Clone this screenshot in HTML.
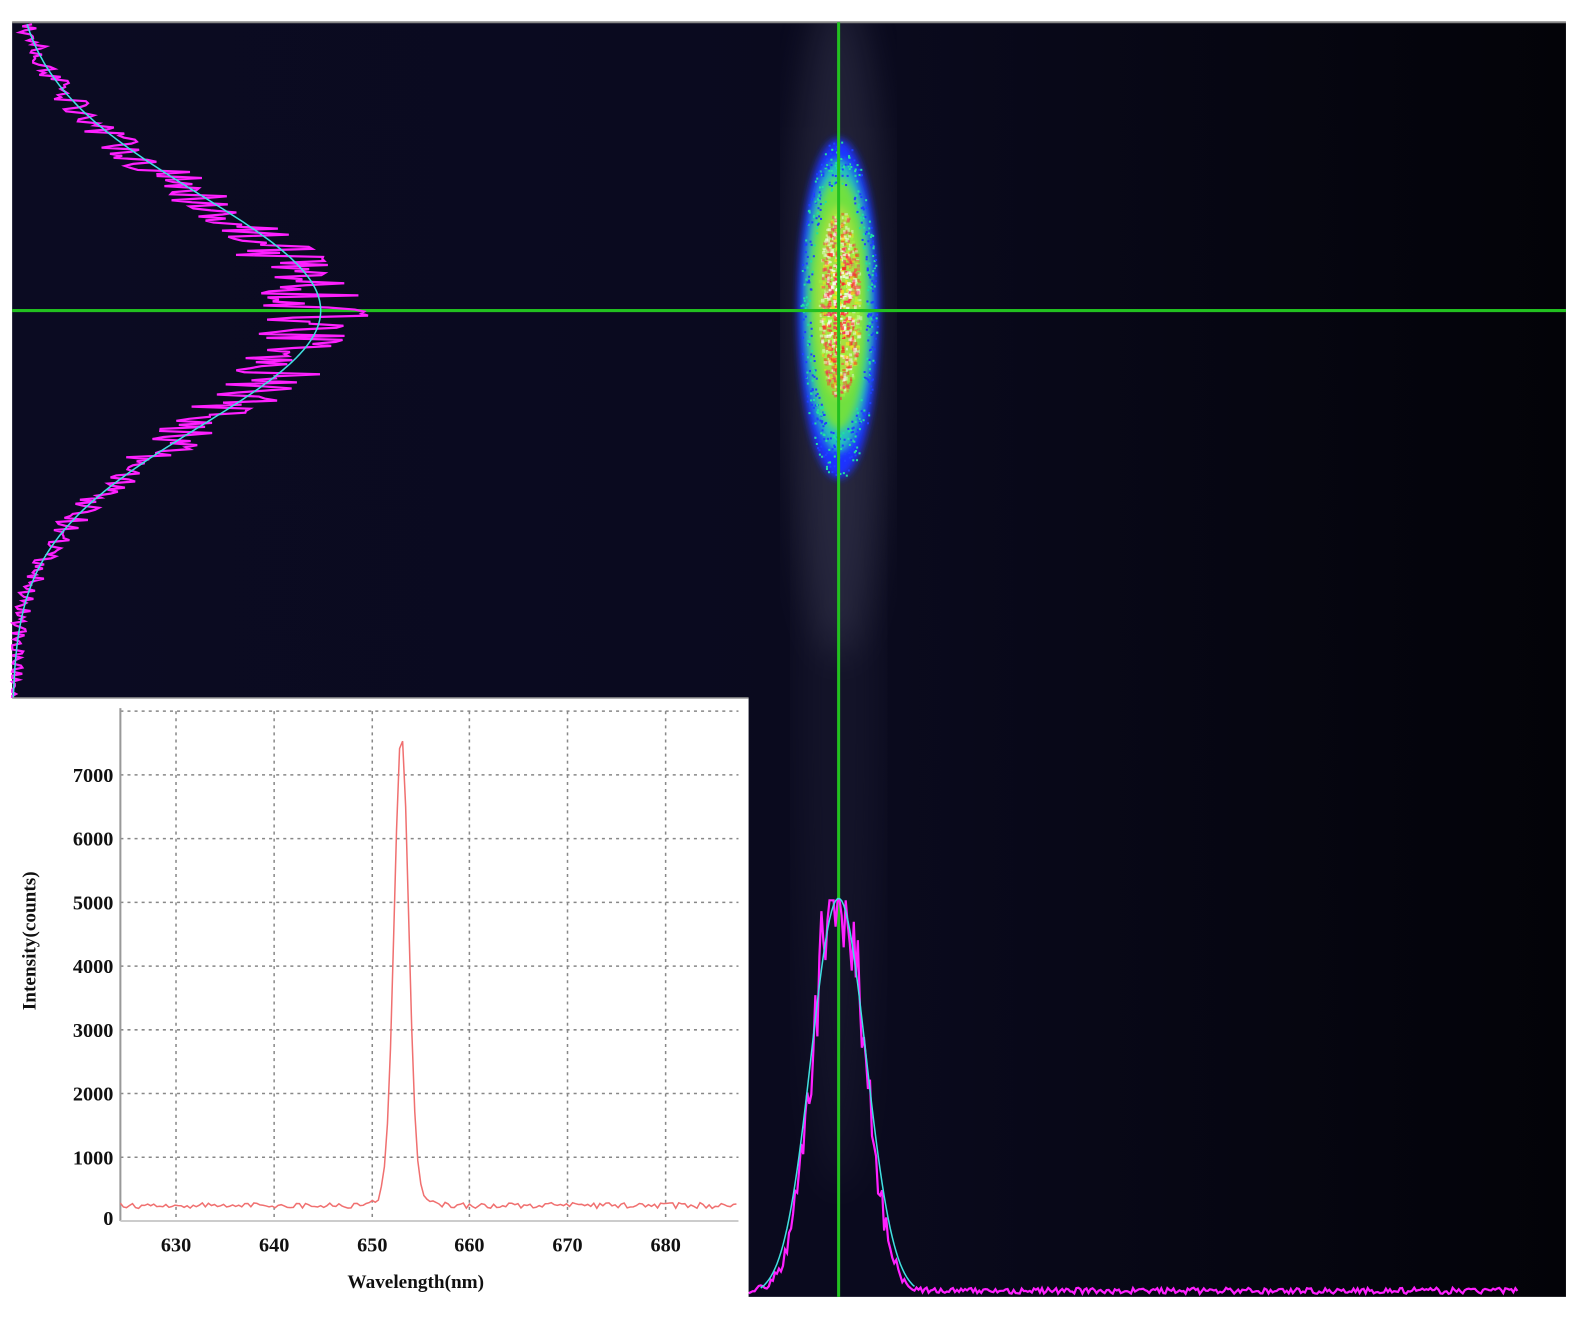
<!DOCTYPE html>
<html><head><meta charset="utf-8"><style>
html,body{margin:0;padding:0;background:#fff;}
body{width:1588px;height:1319px;position:relative;overflow:hidden;font-family:"Liberation Serif",serif;}
svg{position:absolute;left:0;top:0;}
</style></head><body>
<svg width="1588" height="1319" viewBox="0 0 1588 1319">
<defs>
<linearGradient id="bg" x1="0" x2="1" y1="0" y2="0">
<stop offset="0" stop-color="#0b0b22"/><stop offset="0.55" stop-color="#0a0a1e"/><stop offset="1" stop-color="#030308"/>
</linearGradient>
<filter id="b2"><feGaussianBlur stdDeviation="2"/></filter>
<filter id="b4"><feGaussianBlur stdDeviation="4"/></filter>
<filter id="b25"><feGaussianBlur stdDeviation="18"/></filter>
<clipPath id="pc"><rect x="12" y="23" width="1536" height="1259"/></clipPath>
</defs>
<g transform="scale(1.0116)">
<rect x="12" y="22" width="1536" height="1260" fill="url(#bg)"/>
<line x1="12" y1="22" x2="1548" y2="22" stroke="#888" stroke-width="2"/>
<g clip-path="url(#pc)">
<ellipse cx="829" cy="320" rx="48" ry="330" fill="#8a8aa8" opacity="0.18" filter="url(#b25)"/>
<ellipse cx="829" cy="700" rx="40" ry="480" fill="#50506a" opacity="0.14" filter="url(#b25)"/>
<ellipse cx="829" cy="305" rx="40" ry="168" fill="#1a30ff" filter="url(#b4)"/>
<ellipse cx="829" cy="302" rx="34" ry="145" fill="#20c0c0" filter="url(#b4)"/>
<ellipse cx="829" cy="300" rx="29" ry="125" fill="#70e040" filter="url(#b4)"/>
<ellipse cx="829" cy="298" rx="22" ry="95" fill="#c0e040" opacity="0.7" filter="url(#b4)"/>
<g id="speck"></g>
</g>
<line x1="829" y1="22" x2="829" y2="1282" stroke="#22c020" stroke-width="3"/>
<line x1="12" y1="307" x2="1548" y2="307" stroke="#22c020" stroke-width="3"/>
<g id="curves"></g>
<rect x="0" y="690" width="740" height="640" fill="#fff"/>
<line x1="12" y1="690" x2="740" y2="690" stroke="#999" stroke-width="1.5"/>
<g stroke="#888" stroke-width="1.5" stroke-dasharray="3,4" fill="none">
<line x1="119" y1="703" x2="730" y2="703"/>
<line x1="119" y1="766" x2="730" y2="766"/>
<line x1="119" y1="829" x2="730" y2="829"/>
<line x1="119" y1="892" x2="730" y2="892"/>
<line x1="119" y1="955" x2="730" y2="955"/>
<line x1="119" y1="1018" x2="730" y2="1018"/>
<line x1="119" y1="1081" x2="730" y2="1081"/>
<line x1="119" y1="1144" x2="730" y2="1144"/>
<line x1="174" y1="703" x2="174" y2="1206"/>
<line x1="271" y1="703" x2="271" y2="1206"/>
<line x1="368" y1="703" x2="368" y2="1206"/>
<line x1="464" y1="703" x2="464" y2="1206"/>
<line x1="561" y1="703" x2="561" y2="1206"/>
<line x1="658" y1="703" x2="658" y2="1206"/>
</g>
<line x1="119" y1="700" x2="119" y2="1207" stroke="#999" stroke-width="2"/>
<line x1="119" y1="1207" x2="730" y2="1207" stroke="#ccc" stroke-width="2"/>
<polyline id="spec" fill="none" stroke="#f07070" stroke-width="1.5" points=""/>
<g font-family="Liberation Serif,serif" font-weight="bold" font-size="20" fill="#111" text-anchor="end">
<text x="112" y="773">7000</text><text x="112" y="836">6000</text><text x="112" y="899">5000</text>
<text x="112" y="962">4000</text><text x="112" y="1025">3000</text><text x="112" y="1088">2000</text>
<text x="112" y="1151">1000</text><text x="112" y="1211">0</text>
</g>
<g font-family="Liberation Serif,serif" font-weight="bold" font-size="20" fill="#111" text-anchor="middle">
<text x="174" y="1237">630</text><text x="271" y="1237">640</text><text x="368" y="1237">650</text>
<text x="464" y="1237">660</text><text x="561" y="1237">670</text><text x="658" y="1237">680</text>
<text x="411" y="1273" font-size="19">Wavelength(nm)</text>
<text transform="translate(35,930) rotate(-90)" font-size="19">Intensity(counts)</text>
</g>
</g>
</svg>
<script>
(function(){
var s=12345;function r(){s=(s*16807)%2147483647;return s/2147483647;}
var NS="http://www.w3.org/2000/svg",g=document.getElementById("curves");
function pl(pts,col,w){var p=document.createElementNS(NS,"polyline");p.setAttribute("points",pts.join(" "));p.setAttribute("fill","none");p.setAttribute("stroke",col);p.setAttribute("stroke-width",w);g.appendChild(p);}
// speckles
var sp=document.getElementById("speck"),cols=["#ff2020","#ffffff","#ffe020","#ff4040","#ffffff","#a0ff40","#ff2060"];
for(var i=0;i<900;i++){var a=r()*2*Math.PI,rr=Math.sqrt(r());var k=rr*0.85;
var cx=829+Math.cos(a)*k*24,cy=300+Math.sin(a)*k*110;
var d=document.createElementNS(NS,"rect");d.setAttribute("x",cx.toFixed(1));d.setAttribute("y",cy.toFixed(1));
d.setAttribute("width",2+r()*2);d.setAttribute("height",2+r()*2);d.setAttribute("fill",cols[Math.floor(r()*cols.length)]);
d.setAttribute("opacity",(0.9-0.5*rr).toFixed(2));sp.appendChild(d);}
for(var i=0;i<500;i++){var a=r()*2*Math.PI,rr=0.75+0.3*r();
var cx=829+Math.cos(a)*rr*36,cy=305+Math.sin(a)*rr*160;
var d=document.createElementNS(NS,"rect");d.setAttribute("x",cx.toFixed(1));d.setAttribute("y",cy.toFixed(1));
d.setAttribute("width",2);d.setAttribute("height",2);d.setAttribute("fill",r()<0.5?"#2040ff":"#20e0a0");sp.appendChild(d);}
var m=[],c=[];
for(var y=24;y<=690;y+=2){var e=Math.exp(-Math.pow(y-307,2)/(2*115*115));
var base=12+300*e;var n=(r()-0.5)*(15+90*e);m.push((Math.max(12,base+n)).toFixed(1)+","+y);
c.push((12+305*e).toFixed(1)+","+y);}
pl(m,"#ff20ff",2.2);pl(c,"#40e0e0",1.5);
var m2=[],c2=[];
for(var x=740;x<=1500;x+=2){var e=Math.exp(-Math.pow(x-829,2)/(2*24*24));
var h=390*e*1.08;if(h>388)h=388;var n=(r()-0.5)*(6+120*e);var yy=1276-h-n;if(yy<890)yy=890;if(yy>1279)yy=1279;
m2.push(x+","+yy.toFixed(1));
if(x>750&&x<905)c2.push(x+","+(1280-392*Math.exp(-Math.pow(x-829,2)/(2*27*27))).toFixed(1));}
pl(m2,"#ff20ff",2.2);pl(c2,"#40e0e0",1.5);
var q=[];
for(var x=119;x<=730;x+=3){var nm=624.3+(x-119)/9.68;
var v=180+(r()-0.5)*90+7200*Math.exp(-Math.pow(nm-653,2)/(2*0.75*0.75))+150*Math.exp(-Math.pow(nm-653,2)/8);
q.push(x+","+(1203-v*0.063).toFixed(1));}
document.getElementById("spec").setAttribute("points",q.join(" "));
})();
</script>
</body></html>
